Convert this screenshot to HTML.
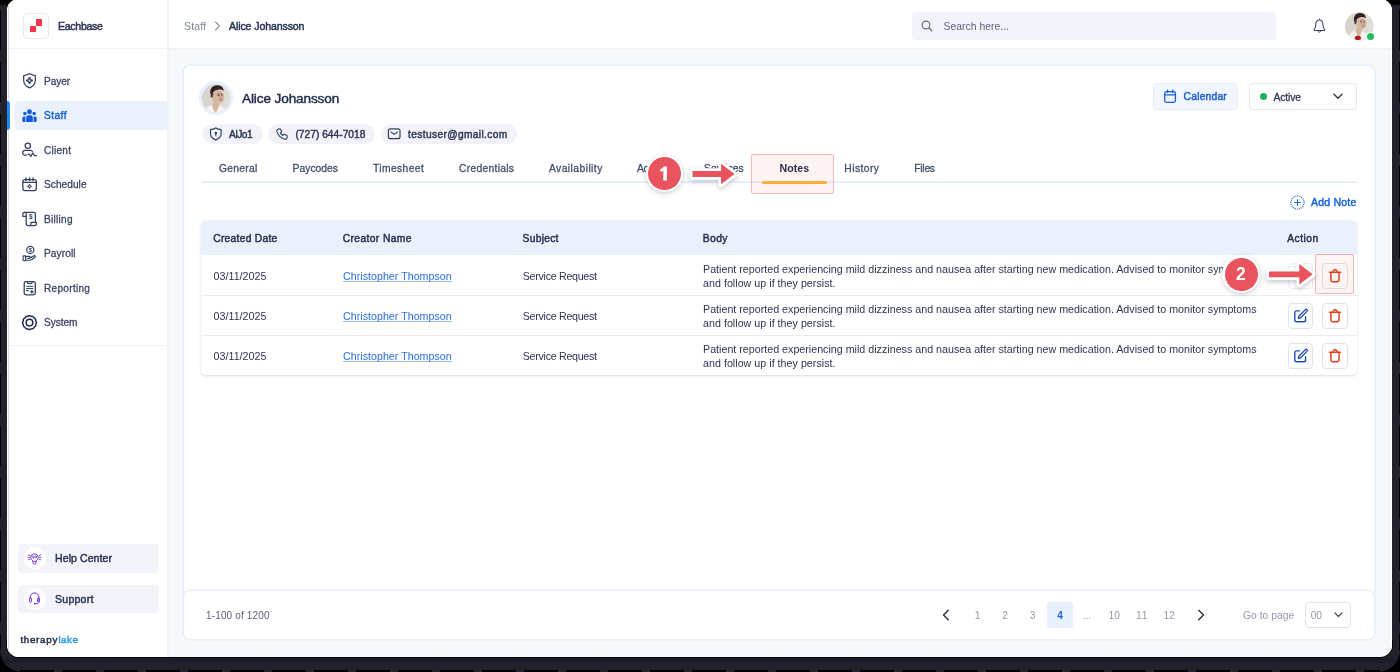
<!DOCTYPE html>
<html><head><meta charset="utf-8"><title>Eachbase</title>
<style>
*{box-sizing:border-box;margin:0;padding:0}
html,body{width:1400px;height:672px;overflow:hidden;background:#000;font-family:"Liberation Sans",sans-serif;}
#frame{position:absolute;left:0;top:0;width:1400px;height:672px;overflow:hidden;background:#000}
.abs{position:absolute}
.t{position:absolute;white-space:pre;font-family:"Liberation Sans",sans-serif}
svg{position:absolute;overflow:visible}
#txt{position:absolute;left:0;top:0;width:1400px;height:672px;will-change:transform}

</style></head>
<body>
<div id="frame">
<div class="abs" style="left:0;top:-40px;width:1400px;height:712px;border-radius:22px;background:#22212c"></div><div class="abs" style="left:0;top:0;width:16px;height:6px;background:linear-gradient(#000 60%,#22212c)"></div><div class="abs" style="right:0;top:0;width:16px;height:6px;background:linear-gradient(#000 60%,#22212c)"></div><div class="abs" style="left:2px;top:658px;width:1396px;height:5.2px;border-radius:0 0 14px 14px;background:#191d2c"></div><div class="abs" style="left:6px;top:640px;width:1386.5px;height:18.2px;border-radius:0 0 13px 13px;background:#07080d"></div><div class="abs" style="left:20px;top:670.4px;width:1360px;height:2px;background:repeating-linear-gradient(90deg,#000 0 34px,#22212c 34px 42px)"></div><div class="abs" style="left:0;top:10px;width:1px;height:640px;background:repeating-linear-gradient(180deg,#000 0 40px,#22212c 40px 52px)"></div><div class="abs" style="left:1399px;top:10px;width:1px;height:640px;background:repeating-linear-gradient(180deg,#000 0 40px,#22212c 40px 52px)"></div><div id="app" class="abs" style="left:6.5px;top:-1px;width:1385.5px;height:658px;border-radius:12px;background:#f6f9fc;overflow:hidden"><div class="abs" style="left:-6.5px;top:1px;width:1400px;height:672px"><div class="abs" style="left:0;top:0;width:167px;height:672px;background:#fff"></div><div class="abs" style="left:0;top:0;width:1400px;height:48px;background:#fff"></div><div class="abs" style="left:167px;top:0;width:1.6px;height:672px;background:#eef3fc"></div><div class="abs" style="left:0;top:48px;width:1400px;height:1px;background:#eef2f9"></div><div class="abs" style="left:8px;top:345px;width:159px;height:1px;background:#eff3fa"></div><div class="abs" style="left:8px;top:0;width:1px;height:672px;background:#d6d9e1"></div><div class="abs" style="left:1390.6px;top:0;width:1px;height:672px;background:#cfd2da"></div><div class="abs" style="left:1391.4px;top:0;width:1.2px;height:672px;background:#fff"></div><div class="abs" style="left:23px;top:13px;width:26px;height:26px;border:1px solid #e6eaf2;border-radius:4px;background:#fff"></div><div class="abs" style="left:36px;top:19px;width:6px;height:7px;background:#f5364a"></div><div class="abs" style="left:30px;top:26px;width:6px;height:6px;background:#f5364a"></div><svg style="left:214px;top:21px" width="7" height="10" viewBox="0 0 7 10"><path d="M1.5 1 L5.5 5 L1.5 9" fill="none" stroke="#8a93a6" stroke-width="1.1" stroke-linecap="round" stroke-linejoin="round"/></svg><div class="abs" style="left:911.7px;top:11.5px;width:364.5px;height:28.3px;border-radius:4px;background:#f2f4f9"></div><svg style="left:921px;top:20px" width="12" height="12" viewBox="0 0 12 12"><circle cx="5" cy="5" r="3.9" fill="none" stroke="#5a6480" stroke-width="1.1"/><path d="M8 8 L11 11" stroke="#5a6480" stroke-width="1.1" stroke-linecap="round"/></svg><svg style="left:1310px;top:16px" width="20" height="20" viewBox="1310 16 20 20"><path d="M1319.4 20 C1316.9 20 1315.9 22 1315.9 24.2 C1315.9 26.6 1315.4 28.2 1314.2 29.6 C1313.9 30 1314.1 30.5 1314.7 30.5 H1324.1 C1324.7 30.5 1324.9 30 1324.6 29.6 C1323.4 28.2 1322.9 26.6 1322.9 24.2 C1322.9 22 1321.9 20 1319.4 20 Z M1319.4 19 V20" fill="none" stroke="#3d4763" stroke-width="1.05" stroke-linejoin="round" stroke-linecap="round"/><path d="M1317.8 31 C1318 32.7 1320.8 32.7 1321 31" fill="none" stroke="#3d4763" stroke-width="1.0" stroke-linecap="round"/></svg><div class="abs" style="left:15px;top:101px;width:152px;height:29px;border-radius:4px 0 0 4px;background:#eaf1fd"></div><div class="abs" style="left:7px;top:101px;width:3px;height:29px;border-radius:0 3px 3px 0;background:#1b8af5"></div><div class="abs" style="left:17.5px;top:544px;width:141px;height:28.5px;border-radius:4px;background:#f3f4f9"></div><div class="abs" style="left:17.5px;top:584.5px;width:141px;height:28.5px;border-radius:4px;background:#f3f4f9"></div><div class="abs" style="left:23.6px;top:547.2px;width:22px;height:22px;border-radius:50%;background:#fff"></div><div class="abs" style="left:23.6px;top:587.7px;width:22px;height:22px;border-radius:50%;background:#fff"></div><div class="abs" style="left:184px;top:65.6px;width:1190px;height:573.6px;border-radius:6px;background:#fff;box-shadow:0 0 0 1.6px #e8effc"></div><div class="abs" style="left:184px;top:590.6px;width:1190px;height:48.6px;border-radius:6px;background:#fff;box-shadow:0 0 0 1.5px #eaf0fa"></div><div class="abs" style="left:199px;top:80.9px;width:34.2px;height:34.2px;border-radius:50%;background:#e6effd"></div><div class="abs" style="left:201.5px;top:124px;width:61.0px;height:20px;border-radius:10px;background:#f1f3f8"></div><div class="abs" style="left:268px;top:124px;width:106.5px;height:20px;border-radius:10px;background:#f1f3f8"></div><div class="abs" style="left:380.5px;top:124px;width:136.0px;height:20px;border-radius:10px;background:#f1f3f8"></div><div class="abs" style="left:1153px;top:83px;width:84.5px;height:26.5px;border:1px solid #e5edfb;border-radius:4px;background:#f2f6fe"></div><div class="abs" style="left:1248.5px;top:83px;width:108.5px;height:26.5px;border:1px solid #e3e7f0;border-radius:4px;background:#fff"></div><div class="abs" style="left:1260px;top:93px;width:7px;height:7px;border-radius:50%;background:#1fb25a"></div><svg style="left:1333px;top:93px" width="10" height="7" viewBox="0 0 10 7"><path d="M1 1.2 L5 5.2 L9 1.2" fill="none" stroke="#2b3040" stroke-width="1.3" stroke-linecap="round" stroke-linejoin="round"/></svg><div class="abs" style="left:202px;top:180.7px;width:1155px;height:2.6px;background:#e8effc"></div><div class="abs" style="left:762px;top:180.9px;width:64.6px;height:3px;border-radius:1.5px;background:#ffb53c"></div><svg style="left:1290px;top:194.7px" width="15" height="15" viewBox="0 0 15 15"><circle cx="7.5" cy="7.5" r="6.6" fill="none" stroke="#1a66dd" stroke-width="1.3" stroke-dasharray="0.01 2.073" stroke-linecap="round"/><path d="M7.5 4.6 V10.4 M4.6 7.5 H10.4" stroke="#1a66dd" stroke-width="1" stroke-linecap="round"/></svg><div class="abs" style="left:201.4px;top:220.7px;width:1155.6px;height:154.8px;border-radius:5px;background:#fff;box-shadow:0 0.6px 2.4px rgba(30,40,70,.17)"></div><div class="abs" style="left:201.4px;top:220.7px;width:1155.6px;height:34.4px;border-radius:5px 5px 0 0;background:#eaf1fd"></div><div class="abs" style="left:201.5px;top:295.3px;width:1155.5px;height:1px;background:#e9ecf3"></div><div class="abs" style="left:201.5px;top:335.3px;width:1155.5px;height:1px;background:#e9ecf3"></div><div class="abs" style="left:1287.7px;top:263.1px;width:25.4px;height:25.6px;border:1px solid #eceef3;border-radius:4px;background:#fff"></div><div class="abs" style="left:1287.7px;top:303.1px;width:25.4px;height:25.6px;border:1px solid #dfe2ea;border-radius:4px;background:#fff"></div><svg style="left:1287.7px;top:303.1px" width="26" height="26" viewBox="0 0 26 26"><path d="M11.6 7.9 H8.6 C7.4 7.9 6.8 8.6 6.8 9.7 V16.9 C6.8 18.1 7.5 18.7 8.6 18.7 H15.8 C17 18.7 17.6 18 17.6 16.9 V13.6" fill="none" stroke="#1c50b4" stroke-width="1.4" stroke-linecap="round"/><path d="M17.3 6.7 C17.8 6.2 18.5 6.2 19 6.7 C19.5 7.2 19.5 7.9 19 8.4 L12.4 15 L10.4 15.4 L10.8 13.2 Z" fill="none" stroke="#1c50b4" stroke-width="1.3" stroke-linejoin="round"/></svg><div class="abs" style="left:1287.7px;top:343.1px;width:25.4px;height:25.6px;border:1px solid #dfe2ea;border-radius:4px;background:#fff"></div><svg style="left:1287.7px;top:343.1px" width="26" height="26" viewBox="0 0 26 26"><path d="M11.6 7.9 H8.6 C7.4 7.9 6.8 8.6 6.8 9.7 V16.9 C6.8 18.1 7.5 18.7 8.6 18.7 H15.8 C17 18.7 17.6 18 17.6 16.9 V13.6" fill="none" stroke="#1c50b4" stroke-width="1.4" stroke-linecap="round"/><path d="M17.3 6.7 C17.8 6.2 18.5 6.2 19 6.7 C19.5 7.2 19.5 7.9 19 8.4 L12.4 15 L10.4 15.4 L10.8 13.2 Z" fill="none" stroke="#1c50b4" stroke-width="1.3" stroke-linejoin="round"/></svg><div class="abs" style="left:1322.1px;top:263.1px;width:25.6px;height:25.6px;border:1px solid #dfe2ea;border-radius:4px;background:#fff"></div><svg style="left:1322.1px;top:263.1px" width="26" height="26" viewBox="0 0 26 26"><path d="M7.5 9.2 H18.5" stroke="#e23f1e" stroke-width="1.45" stroke-linecap="round"/><path d="M11 8.9 C11 7.4 11.7 6.7 13 6.7 C14.3 6.7 15 7.4 15 8.9" fill="none" stroke="#e23f1e" stroke-width="1.35"/><path d="M8.9 9.6 L9 17 C9 18.1 9.6 18.7 10.7 18.7 H15.3 C16.4 18.7 17 18.1 17 17 L17.1 9.6" fill="none" stroke="#e23f1e" stroke-width="1.5" stroke-linejoin="round"/></svg><div class="abs" style="left:1322.1px;top:303.1px;width:25.6px;height:25.6px;border:1px solid #dfe2ea;border-radius:4px;background:#fff"></div><svg style="left:1322.1px;top:303.1px" width="26" height="26" viewBox="0 0 26 26"><path d="M7.5 9.2 H18.5" stroke="#e23f1e" stroke-width="1.45" stroke-linecap="round"/><path d="M11 8.9 C11 7.4 11.7 6.7 13 6.7 C14.3 6.7 15 7.4 15 8.9" fill="none" stroke="#e23f1e" stroke-width="1.35"/><path d="M8.9 9.6 L9 17 C9 18.1 9.6 18.7 10.7 18.7 H15.3 C16.4 18.7 17 18.1 17 17 L17.1 9.6" fill="none" stroke="#e23f1e" stroke-width="1.5" stroke-linejoin="round"/></svg><div class="abs" style="left:1322.1px;top:343.1px;width:25.6px;height:25.6px;border:1px solid #dfe2ea;border-radius:4px;background:#fff"></div><svg style="left:1322.1px;top:343.1px" width="26" height="26" viewBox="0 0 26 26"><path d="M7.5 9.2 H18.5" stroke="#e23f1e" stroke-width="1.45" stroke-linecap="round"/><path d="M11 8.9 C11 7.4 11.7 6.7 13 6.7 C14.3 6.7 15 7.4 15 8.9" fill="none" stroke="#e23f1e" stroke-width="1.35"/><path d="M8.9 9.6 L9 17 C9 18.1 9.6 18.7 10.7 18.7 H15.3 C16.4 18.7 17 18.1 17 17 L17.1 9.6" fill="none" stroke="#e23f1e" stroke-width="1.5" stroke-linejoin="round"/></svg><div class="abs" style="left:1047px;top:602px;width:26px;height:26px;border-radius:3px;background:#e8f0fd"></div><svg style="left:942px;top:609px" width="8" height="12" viewBox="0 0 8 12"><path d="M6.3 1.2 L1.5 6 L6.3 10.8" fill="none" stroke="#2b3040" stroke-width="1.4" stroke-linecap="round" stroke-linejoin="round"/></svg><svg style="left:1197px;top:609px" width="8" height="12" viewBox="0 0 8 12"><path d="M1.7 1.2 L6.5 6 L1.7 10.8" fill="none" stroke="#2b3040" stroke-width="1.4" stroke-linecap="round" stroke-linejoin="round"/></svg><div class="abs" style="left:1304.5px;top:602px;width:46.5px;height:26px;border:1px solid #dfe4ee;border-radius:4px;background:#fff"></div><svg style="left:1333.5px;top:612px" width="9" height="6" viewBox="0 0 9 6"><path d="M1 1 L4.5 4.5 L8 1" fill="none" stroke="#4a5163" stroke-width="1.3" stroke-linecap="round" stroke-linejoin="round"/></svg></div></div><svg style="left:20px;top:70px" width="20" height="22" viewBox="20 70 20 22"><path d="M29.5 73.6 C27.6 75 25.6 75.5 23.7 75.6 V80.2 C23.7 84 26 86.4 29.5 87.8 C33 86.4 35.3 84 35.3 80.2 V75.6 C33.4 75.5 31.4 75 29.5 73.6 Z" fill="none" stroke="#34405f" stroke-width="1.25" stroke-linecap="round" stroke-linejoin="round" /><path d="M29.5 78.3 V82.7 M27.3 80.5 H31.7" stroke="#34405f" stroke-width="2.5" stroke-linecap="round"/><circle cx="29.5" cy="80.5" r="0.95" fill="#f0f2f7"/></svg><svg style="left:20px;top:106px" width="20" height="20" viewBox="20 106 20 20"><circle cx="29.5" cy="111.8" r="2.45" fill="#0f5ce0"/><circle cx="24.9" cy="113.5" r="1.75" fill="#0f5ce0"/><circle cx="34.1" cy="113.5" r="1.75" fill="#0f5ce0"/><path d="M26.2 121.9 V117.6 C26.2 116.2 27.2 115.3 28.5 115.3 H30.5 C31.8 115.3 32.8 116.2 32.8 117.6 V121.9 Z" fill="#0f5ce0"/><path d="M22.3 120.4 V118.6 C22.3 117.5 23 116.6 24 116.6 H25.4 V121.9 H23.8 C22.9 121.9 22.3 121.3 22.3 120.4 Z" fill="#0f5ce0"/><path d="M36.7 120.4 V118.6 C36.7 117.5 36 116.6 35 116.6 H33.6 V121.9 H35.2 C36.1 121.9 36.7 121.3 36.7 120.4 Z" fill="#0f5ce0"/></svg><svg style="left:20px;top:141px" width="20" height="18" viewBox="20 141 20 18"><circle cx="27.8" cy="145.7" r="2.65" fill="none" stroke="#34405f" stroke-width="1.25"/><path d="M32.4 151.5 C32 150.7 31.3 150.3 30.4 150.3 H25 C23.6 150.3 22.8 151.2 22.8 152.5 V153.6 C22.8 154.6 23.5 155.1 24.4 155.1 H26.4" fill="none" stroke="#34405f" stroke-width="1.25" stroke-linecap="round" stroke-linejoin="round" /><path d="M27.8 154.3 H29.5 L30.8 156.5 L32.8 152.9 L34.4 155.7 H36.4" fill="none" stroke="#34405f" stroke-width="1.2" stroke-linecap="round" stroke-linejoin="round" /></svg><svg style="left:20px;top:175px" width="20" height="18" viewBox="20 175 20 18"><rect x="22.9" y="179.5" width="13.4" height="11" rx="2" fill="none" stroke="#34405f" stroke-width="1.25"/><path d="M22.9 182.4 H36.3" fill="none" stroke="#34405f" stroke-width="1.25" stroke-linecap="round" stroke-linejoin="round" /><path d="M26 178 V180.6 M29.5 178 V180.6 M33 178 V180.6" fill="none" stroke="#34405f" stroke-width="1.3" stroke-linecap="round" stroke-linejoin="round" /><path d="M29.5 184 L30.4 185.5 L31.9 186.4 L30.4 187.3 L29.5 188.8 L28.6 187.3 L27.1 186.4 L28.6 185.5 Z" fill="#34405f" stroke="#34405f" stroke-width="0.6" stroke-linejoin="round"/><circle cx="29.5" cy="186.4" r="0.75" fill="#fff"/></svg><svg style="left:20px;top:209px" width="20" height="20" viewBox="20 209 20 20"><path d="M26.2 216.4 H22.9 V213.9 C22.9 212.9 23.6 212.3 24.5 212.3 H33.6 C34.7 212.3 35.4 213 35.4 214.1 V222.3" fill="none" stroke="#34405f" stroke-width="1.25" stroke-linecap="round" stroke-linejoin="round" /><path d="M24.5 212.3 C25.5 212.3 26.2 213 26.2 214.1 V223.6 C26.2 224.8 27 225.6 28.2 225.6 H34.4 C35.6 225.6 36.4 224.8 36.4 223.8 V222.4 H31 V223.7 C31 224.8 30.3 225.6 29.2 225.6" fill="none" stroke="#34405f" stroke-width="1.25" stroke-linecap="round" stroke-linejoin="round" /><text x="30.75" y="219.4" font-family="Liberation Sans, sans-serif" font-size="6.3" font-weight="700" text-anchor="middle" fill="#34405f">$</text></svg><svg style="left:20px;top:244px" width="20" height="20" viewBox="20 244 20 20"><circle cx="30.3" cy="249.9" r="3.55" fill="none" stroke="#34405f" stroke-width="1.2"/><text x="30.3" y="252" font-family="Liberation Sans, sans-serif" font-size="5.6" font-weight="700" text-anchor="middle" fill="#34405f">$</text><rect x="23.1" y="255.8" width="2.5" height="4.9" rx="0.6" fill="none" stroke="#34405f" stroke-width="1.15"/><path d="M25.6 256.4 H28.6 C29.4 256.4 29.9 256.8 30 257.4 H31.6 M30 257.4 C30 258 29.5 258.3 28.8 258.3 H27.8 M30.4 257.6 L34 255.7 C34.9 255.2 35.8 256.2 35 257 C33.5 258.6 31.3 260.2 29.2 260.2 H25.6" fill="none" stroke="#34405f" stroke-width="1.15" stroke-linecap="round" stroke-linejoin="round" /></svg><svg style="left:20px;top:278px" width="20" height="20" viewBox="20 278 20 20"><rect x="24.2" y="281.6" width="11.1" height="13.3" rx="1.8" fill="none" stroke="#34405f" stroke-width="1.3"/><path d="M27 281.6 L27.8 283.5 H31.7 L32.5 281.6" fill="none" stroke="#34405f" stroke-width="1.15" stroke-linecap="round" stroke-linejoin="round" /><path d="M26.6 286.3 H32.9 M26.6 288.5 H32.9 M26.6 290.6 H28.3" fill="none" stroke="#34405f" stroke-width="1.05" stroke-linecap="round" stroke-linejoin="round" /><path d="M30.6 291.8 H33.2 M31.9 290.5 V293.1" fill="none" stroke="#34405f" stroke-width="1.3" stroke-linecap="round" stroke-linejoin="round" /></svg><svg style="left:20px;top:313px" width="20" height="20" viewBox="20 313 20 20"><path d="M36.42 322.60 L36.37 323.05 L36.22 323.48 L35.98 323.89 L35.66 324.25 L35.76 324.72 L35.76 325.19 L35.68 325.65 L35.50 326.06 L35.23 326.43 L34.88 326.73 L34.47 326.96 L34.01 327.11 L33.86 327.57 L33.63 327.98 L33.33 328.33 L32.96 328.60 L32.55 328.78 L32.09 328.86 L31.62 328.86 L31.15 328.76 L30.79 329.08 L30.38 329.32 L29.95 329.47 L29.50 329.53 L29.05 329.47 L28.62 329.32 L28.21 329.08 L27.85 328.76 L27.38 328.86 L26.91 328.86 L26.45 328.78 L26.04 328.60 L25.67 328.33 L25.37 327.98 L25.14 327.57 L24.99 327.11 L24.53 326.96 L24.12 326.73 L23.77 326.43 L23.50 326.06 L23.32 325.65 L23.24 325.19 L23.24 324.72 L23.34 324.25 L23.02 323.89 L22.78 323.48 L22.63 323.05 L22.57 322.60 L22.63 322.15 L22.78 321.72 L23.02 321.31 L23.34 320.95 L23.24 320.48 L23.24 320.01 L23.32 319.55 L23.50 319.14 L23.77 318.77 L24.12 318.47 L24.53 318.24 L24.99 318.09 L25.14 317.63 L25.37 317.22 L25.67 316.87 L26.04 316.60 L26.45 316.42 L26.91 316.34 L27.38 316.34 L27.85 316.44 L28.21 316.12 L28.62 315.88 L29.05 315.73 L29.50 315.68 L29.95 315.73 L30.38 315.88 L30.79 316.12 L31.15 316.44 L31.62 316.34 L32.09 316.34 L32.55 316.42 L32.96 316.60 L33.33 316.87 L33.63 317.22 L33.86 317.63 L34.01 318.09 L34.47 318.24 L34.88 318.47 L35.23 318.77 L35.50 319.14 L35.68 319.55 L35.76 320.01 L35.76 320.48 L35.66 320.95 L35.98 321.31 L36.22 321.72 L36.37 322.15 L36.42 322.60 Z" fill="none" stroke="#1f2b4f" stroke-width="1.45" stroke-linejoin="round"/><circle cx="29.5" cy="322.6" r="3.35" fill="none" stroke="#1f2b4f" stroke-width="1.5"/></svg><svg style="left:24px;top:548px" width="22" height="22" viewBox="24 548 22 22"><path d="M32.6 560.6 C31.3 559.7 30.9 558.4 30.9 557.3 C30.9 555.3 32.5 553.8 34.5 553.8 C36.5 553.8 38.1 555.3 38.1 557.3 C38.1 558.4 37.7 559.7 36.4 560.6 L35.9 563.2 C35.8 563.9 35.3 564.3 34.5 564.3 C33.7 564.3 33.2 563.9 33.1 563.2 Z M33 561.4 H36" fill="none" stroke="#6b36d2" stroke-width="0.95" stroke-linecap="round" stroke-linejoin="round" /><path d="M28.3 555 L30 555.6 M28 557.4 H29.8 M28.3 559.8 L30 559.2 M40.7 555 L39 555.6 M41 557.4 H39.2 M40.7 559.8 L39 559.2" fill="none" stroke="#6b36d2" stroke-width="0.85" stroke-linecap="round" stroke-linejoin="round" /><circle cx="33.3" cy="557" r="0.95" fill="none" stroke="#6b36d2" stroke-width="0.8"/><circle cx="35.7" cy="557" r="0.95" fill="none" stroke="#6b36d2" stroke-width="0.8"/></svg><svg style="left:24px;top:588px" width="22" height="22" viewBox="24 588 22 22"><path d="M30.1 598.6 V597.3 C30.1 594.7 32 592.9 34.5 592.9 C37 592.9 38.9 594.7 38.9 597.3 V601.6 C38.9 602.9 38 603.6 36.8 603.6 H35.4" fill="none" stroke="#6b36d2" stroke-width="1.0" stroke-linecap="round" stroke-linejoin="round" /><rect x="29.5" y="597.9" width="2" height="4.3" rx="1" fill="none" stroke="#6b36d2" stroke-width="0.95"/><rect x="37.5" y="597.9" width="2" height="4.3" rx="1" fill="none" stroke="#6b36d2" stroke-width="0.95"/><circle cx="34.8" cy="603.6" r="0.85" fill="#6b36d2"/></svg><svg style="left:207px;top:124px" width="18" height="20" viewBox="207 124 18 20"><path d="M215.8 127.9 C214.2 129.1 212.3 129.5 210.5 129.6 V133.4 C210.5 136.8 212.7 138.7 215.8 139.9 C218.9 138.7 221.1 136.8 221.1 133.4 V129.6 C219.3 129.5 217.4 129.1 215.8 127.9 Z" fill="none" stroke="#34405f" stroke-width="1.2" stroke-linecap="round" stroke-linejoin="round" /><circle cx="215.8" cy="132.9" r="1.25" fill="#34405f"/><path d="M215.8 133 V135.6" stroke="#34405f" stroke-width="1.1" stroke-linecap="round"/></svg><svg style="left:273px;top:124px" width="18" height="20" viewBox="273 124 18 20"><path d="M279.3 128.9 L277.6 129.5 C276.9 129.8 276.6 130.4 276.8 131.2 C277.9 135.2 280.8 138.2 284.9 139.3 C285.7 139.5 286.3 139.2 286.6 138.5 L287.3 136.8 C287.5 136.2 287.3 135.7 286.8 135.4 L284.9 134.4 C284.4 134.2 283.9 134.3 283.6 134.7 L282.9 135.5 C281.7 134.9 280.9 134.1 280.4 133 L281.2 132.3 C281.6 132 281.7 131.5 281.5 131 L280.6 129.3 C280.3 128.9 279.8 128.7 279.3 128.9 Z" fill="none" stroke="#34405f" stroke-width="1.15" stroke-linecap="round" stroke-linejoin="round" /></svg><svg style="left:385px;top:124px" width="18" height="20" viewBox="385 124 18 20"><rect x="388.4" y="128.8" width="11.6" height="9.9" rx="2" fill="none" stroke="#34405f" stroke-width="1.2"/><path d="M391 132 L394.2 134.4 L397.4 132" fill="none" stroke="#34405f" stroke-width="1.15" stroke-linecap="round" stroke-linejoin="round" /></svg><svg style="left:1161px;top:87px" width="18" height="18" viewBox="1161 87 18 18"><rect x="1164.7" y="91.6" width="10.7" height="10.8" rx="1.8" fill="none" stroke="#1a5fd4" stroke-width="1.3"/><path d="M1164.7 94.8 H1175.4" fill="none" stroke="#1a5fd4" stroke-width="1.2" stroke-linecap="round" stroke-linejoin="round" /><path d="M1167.5 90.1 V92.5 M1172.7 90.1 V92.5" fill="none" stroke="#1a5fd4" stroke-width="1.3" stroke-linecap="round" stroke-linejoin="round" /></svg><svg style="left:200.9px;top:82.8px" width="30.4" height="30.4" viewBox="200.9 82.8 30.4 30.4"><defs><clipPath id="ca"><circle cx="0" cy="0" r="14.3"/></clipPath>
<linearGradient id="ga" x1="0" x2="1" y1="0" y2="0"><stop offset="0" stop-color="#d6d2ca"/><stop offset="1" stop-color="#e2dfd9"/></linearGradient>
<filter id="fa" x="-20%" y="-20%" width="140%" height="140%"><feGaussianBlur stdDeviation="0.45"/></filter></defs>
<g transform="translate(216.1 98) scale(0.9930069930069929)"><g clip-path="url(#ca)">
<circle cx="0" cy="0" r="14.6" fill="url(#ga)"/>
<g filter="url(#fa)" transform="translate(0.2 2.1) scale(1.15)">
<path d="M-12.5 15 C-11.5 9.5 -9 6.6 -5.6 4.6 L-2.6 5.4 L-0.8 11 L1.8 4.2 C5.5 5.2 9 8 10.8 15 Z" fill="#f6f3ef"/>
<path d="M-3 0.5 L2.6 1.8 L2.3 4.8 L-0.7 11.8 L-3.6 5.6 C-3 4 -2.8 2 -3 0.5 Z" fill="#d8b49e"/>
<ellipse cx="1.6" cy="-3.2" rx="5.3" ry="6" transform="rotate(-12 1.6 -3.2)" fill="#d9b7a2"/>
<ellipse cx="4" cy="-2.6" rx="1.8" ry="3.6" transform="rotate(-12 4 -2.6)" fill="#bf9a86" opacity=".6"/>
<ellipse cx="-3.9" cy="-4.6" rx="1.2" ry="2.4" transform="rotate(10 -3.9 -4.6)" fill="#5a463d"/>
<path d="M-5.4 -6.2 C-5.8 -10.8 -2.8 -13.3 1 -13.2 C4.4 -13.1 6.4 -11 6.4 -8.2 C4.6 -9.5 2.2 -9.7 0.1 -8.9 C-2 -8.1 -3.4 -6.8 -3.9 -4.4 Z" fill="#2e2420"/>
<path d="M0.6 -5.2 L2.8 -5.7 M4.1 -5.5 L5.5 -5.3" stroke="#4e3a30" stroke-width="0.8" opacity=".85"/>
<path d="M0.9 -4.1 L2.6 -4.3 M4.3 -4.2 L5.3 -4.1" stroke="#3d2c26" stroke-width="0.7" opacity=".8"/>
<path d="M2.4 -0.4 L4.2 -0.5" stroke="#a9675c" stroke-width="0.9"/>

</g></g></g></svg><svg style="left:1344.3999999999999px;top:10.799999999999999px" width="30.8" height="30.8" viewBox="1344.3999999999999 10.799999999999999 30.8 30.8"><defs><clipPath id="cb"><circle cx="0" cy="0" r="14.3"/></clipPath>
<linearGradient id="gb" x1="0" x2="1" y1="0" y2="0"><stop offset="0" stop-color="#d6d2ca"/><stop offset="1" stop-color="#e2dfd9"/></linearGradient>
<filter id="fb" x="-20%" y="-20%" width="140%" height="140%"><feGaussianBlur stdDeviation="0.45"/></filter></defs>
<g transform="translate(1359.8 26.2) scale(1.0069930069930069)"><g clip-path="url(#cb)">
<circle cx="0" cy="0" r="14.6" fill="url(#gb)"/>
<g filter="url(#fb)" transform="">
<path d="M-12.5 15 C-11.5 9.5 -9 6.6 -5.6 4.6 L-2.6 5.4 L-0.8 11 L1.8 4.2 C5.5 5.2 9 8 10.8 15 Z" fill="#f6f3ef"/>
<path d="M-3 0.5 L2.6 1.8 L2.3 4.8 L-0.7 11.8 L-3.6 5.6 C-3 4 -2.8 2 -3 0.5 Z" fill="#d8b49e"/>
<ellipse cx="1.6" cy="-3.2" rx="5.3" ry="6" transform="rotate(-12 1.6 -3.2)" fill="#d9b7a2"/>
<ellipse cx="4" cy="-2.6" rx="1.8" ry="3.6" transform="rotate(-12 4 -2.6)" fill="#bf9a86" opacity=".6"/>
<ellipse cx="-3.9" cy="-4.6" rx="1.2" ry="2.4" transform="rotate(10 -3.9 -4.6)" fill="#5a463d"/>
<path d="M-5.4 -6.2 C-5.8 -10.8 -2.8 -13.3 1 -13.2 C4.4 -13.1 6.4 -11 6.4 -8.2 C4.6 -9.5 2.2 -9.7 0.1 -8.9 C-2 -8.1 -3.4 -6.8 -3.9 -4.4 Z" fill="#2e2420"/>
<path d="M0.6 -5.2 L2.8 -5.7 M4.1 -5.5 L5.5 -5.3" stroke="#4e3a30" stroke-width="0.8" opacity=".85"/>
<path d="M0.9 -4.1 L2.6 -4.3 M4.3 -4.2 L5.3 -4.1" stroke="#3d2c26" stroke-width="0.7" opacity=".8"/>
<path d="M2.4 -0.4 L4.2 -0.5" stroke="#a9675c" stroke-width="0.9"/>
<ellipse cx="-1.5" cy="11.5" rx="3.1" ry="2.1" fill="#ad1a1c"/>
</g></g></g></svg><div class="abs" style="left:1365.9px;top:31.9px;width:9.2px;height:9.2px;border-radius:50%;background:#fff"></div><div class="abs" style="left:1366.9px;top:32.9px;width:7.2px;height:7.2px;border-radius:50%;background:#1fbf60"></div>
<div id="txt">
<span class="t" style="left:58.0px;top:19.3px;line-height:15px;font-size:10.6px;font-weight:400;color:#2a3354;letter-spacing:-0.304px;-webkit-text-stroke:0.45px #2a3354;">Eachbase</span>
<span class="t" style="left:184.0px;top:19.3px;line-height:15px;font-size:10.5px;font-weight:400;color:#7d8597;letter-spacing:0.148px;">Staff</span>
<span class="t" style="left:229.0px;top:19.3px;line-height:15px;font-size:10.6px;font-weight:400;color:#2a3354;letter-spacing:-0.118px;-webkit-text-stroke:0.45px #2a3354;">Alice Johansson</span>
<span class="t" style="left:943.5px;top:19.3px;line-height:15px;font-size:10.4px;font-weight:400;color:#5c6681;letter-spacing:0.017px;">Search here...</span>
<span class="t" style="left:44.0px;top:74.7px;line-height:14px;font-size:10.1px;font-weight:400;color:#3a4465;letter-spacing:-0.044px;-webkit-text-stroke:0.28px #3a4465;">Payer</span>
<span class="t" style="left:44.0px;top:109.2px;line-height:14px;font-size:10.1px;font-weight:400;color:#1a66dd;letter-spacing:0.480px;-webkit-text-stroke:0.45px #1a66dd;">Staff</span>
<span class="t" style="left:44.0px;top:143.7px;line-height:14px;font-size:10.1px;font-weight:400;color:#3a4465;letter-spacing:0.237px;-webkit-text-stroke:0.28px #3a4465;">Client</span>
<span class="t" style="left:44.0px;top:178.2px;line-height:14px;font-size:10.1px;font-weight:400;color:#3a4465;letter-spacing:0.058px;-webkit-text-stroke:0.28px #3a4465;">Schedule</span>
<span class="t" style="left:44.0px;top:212.7px;line-height:14px;font-size:10.1px;font-weight:400;color:#3a4465;letter-spacing:0.260px;-webkit-text-stroke:0.28px #3a4465;">Billing</span>
<span class="t" style="left:44.0px;top:247.2px;line-height:14px;font-size:10.1px;font-weight:400;color:#3a4465;letter-spacing:0.107px;-webkit-text-stroke:0.28px #3a4465;">Payroll</span>
<span class="t" style="left:44.0px;top:281.7px;line-height:14px;font-size:10.1px;font-weight:400;color:#3a4465;letter-spacing:0.277px;-webkit-text-stroke:0.28px #3a4465;">Reporting</span>
<span class="t" style="left:44.0px;top:316.2px;line-height:14px;font-size:10.1px;font-weight:400;color:#3a4465;letter-spacing:-0.031px;-webkit-text-stroke:0.28px #3a4465;">System</span>
<span class="t" style="left:55.0px;top:551.4px;line-height:15px;font-size:10.6px;font-weight:400;color:#2a3354;letter-spacing:0.047px;-webkit-text-stroke:0.45px #2a3354;">Help Center</span>
<span class="t" style="left:55.0px;top:591.9px;line-height:15px;font-size:10.6px;font-weight:400;color:#2a3354;letter-spacing:0.215px;-webkit-text-stroke:0.45px #2a3354;">Support</span>
<span class="t" style="left:20.4px;top:632.9px;line-height:14px;font-size:9.8px;font-weight:400;color:#1e2a4a;letter-spacing:0.702px;-webkit-text-stroke:0.45px #1e2a4a;">therapy</span>
<span class="t" style="left:58.4px;top:632.9px;line-height:14px;font-size:9.8px;font-weight:400;color:#2b98f0;letter-spacing:0.539px;-webkit-text-stroke:0.45px #2b98f0;">lake</span>
<span class="t" style="left:242.0px;top:89.4px;line-height:19px;font-size:13.6px;font-weight:400;color:#232c4d;letter-spacing:-0.121px;-webkit-text-stroke:0.45px #232c4d;">Alice Johansson</span>
<span class="t" style="left:229.1px;top:127.5px;line-height:14px;font-size:10.2px;font-weight:400;color:#2f3857;letter-spacing:-0.496px;-webkit-text-stroke:0.45px #2f3857;">AlJo1</span>
<span class="t" style="left:295.4px;top:127.5px;line-height:14px;font-size:10.2px;font-weight:400;color:#2f3857;letter-spacing:0.025px;-webkit-text-stroke:0.45px #2f3857;">(727) 644-7018</span>
<span class="t" style="left:408.0px;top:127.5px;line-height:14px;font-size:10.2px;font-weight:400;color:#2f3857;letter-spacing:0.370px;-webkit-text-stroke:0.45px #2f3857;">testuser@gmail.com</span>
<span class="t" style="left:1183.6px;top:89.7px;line-height:14px;font-size:10.3px;font-weight:400;color:#1a5ed0;letter-spacing:0.200px;-webkit-text-stroke:0.45px #1a5ed0;">Calendar</span>
<span class="t" style="left:1273.4px;top:90.4px;line-height:15px;font-size:10.4px;font-weight:400;color:#2c3553;letter-spacing:-0.139px;-webkit-text-stroke:0.28px #2c3553;">Active</span>
<span class="t" style="left:219.0px;top:161.9px;line-height:14px;font-size:10.3px;font-weight:400;color:#424c6a;letter-spacing:0.260px;-webkit-text-stroke:0.28px #424c6a;">General</span>
<span class="t" style="left:292.6px;top:161.9px;line-height:14px;font-size:10.3px;font-weight:400;color:#424c6a;letter-spacing:0.024px;-webkit-text-stroke:0.28px #424c6a;">Paycodes</span>
<span class="t" style="left:373.0px;top:161.9px;line-height:14px;font-size:10.3px;font-weight:400;color:#424c6a;letter-spacing:0.387px;-webkit-text-stroke:0.28px #424c6a;">Timesheet</span>
<span class="t" style="left:459.0px;top:161.9px;line-height:14px;font-size:10.3px;font-weight:400;color:#424c6a;letter-spacing:0.291px;-webkit-text-stroke:0.28px #424c6a;">Credentials</span>
<span class="t" style="left:549.0px;top:161.9px;line-height:14px;font-size:10.3px;font-weight:400;color:#424c6a;letter-spacing:0.439px;-webkit-text-stroke:0.28px #424c6a;">Availability</span>
<span class="t" style="left:844.3px;top:161.9px;line-height:14px;font-size:10.3px;font-weight:400;color:#424c6a;letter-spacing:0.442px;-webkit-text-stroke:0.28px #424c6a;">History</span>
<span class="t" style="left:914.3px;top:161.9px;line-height:14px;font-size:10.3px;font-weight:400;color:#424c6a;letter-spacing:-0.262px;-webkit-text-stroke:0.28px #424c6a;">Files</span>
<span class="t" style="left:637.0px;top:161.9px;line-height:14px;font-size:10.3px;font-weight:400;color:#424c6a;letter-spacing:-0.441px;-webkit-text-stroke:0.28px #424c6a;">Access</span>
<span class="t" style="left:704.0px;top:161.9px;line-height:14px;font-size:10.3px;font-weight:400;color:#424c6a;letter-spacing:0.031px;-webkit-text-stroke:0.28px #424c6a;">Services</span>
<span class="t" style="left:779.4px;top:161.2px;line-height:15px;font-size:10.6px;font-weight:700;color:#1d2749;letter-spacing:0.091px;">Notes</span>
<span class="t" style="left:1311.0px;top:195.2px;line-height:15px;font-size:10.5px;font-weight:400;color:#1a66dd;letter-spacing:0.217px;-webkit-text-stroke:0.45px #1a66dd;">Add Note</span>
<span class="t" style="left:213.2px;top:232.1px;line-height:14px;font-size:10.3px;font-weight:400;color:#27304f;letter-spacing:0.259px;-webkit-text-stroke:0.45px #27304f;">Created Date</span>
<span class="t" style="left:342.7px;top:232.1px;line-height:14px;font-size:10.3px;font-weight:400;color:#27304f;letter-spacing:0.375px;-webkit-text-stroke:0.45px #27304f;">Creator Name</span>
<span class="t" style="left:522.5px;top:232.1px;line-height:14px;font-size:10.3px;font-weight:400;color:#27304f;letter-spacing:0.273px;-webkit-text-stroke:0.45px #27304f;">Subject</span>
<span class="t" style="left:702.7px;top:232.1px;line-height:14px;font-size:10.3px;font-weight:400;color:#27304f;letter-spacing:0.439px;-webkit-text-stroke:0.45px #27304f;">Body</span>
<span class="t" style="left:1287.2px;top:232.1px;line-height:14px;font-size:10.3px;font-weight:400;color:#27304f;letter-spacing:0.475px;-webkit-text-stroke:0.45px #27304f;">Action</span>
<span class="t" style="left:213.5px;top:269.1px;line-height:15px;font-size:10.7px;font-weight:400;color:#2c3553;letter-spacing:0.033px;">03/11/2025</span>
<span class="t" style="left:343.0px;top:269.1px;line-height:15px;font-size:10.7px;font-weight:400;color:#2a6fe0;letter-spacing:0.010px;text-decoration:underline;text-underline-offset:0.6px;text-decoration-thickness:1px;text-decoration-skip-ink:none;text-decoration-color:rgba(42,111,224,.5);">Christopher Thompson</span>
<span class="t" style="left:522.8px;top:269.1px;line-height:15px;font-size:10.7px;font-weight:400;color:#2c3553;letter-spacing:-0.302px;">Service Request</span>
<span class="t" style="left:703.0px;top:261.8px;line-height:15px;font-size:10.7px;font-weight:400;color:#2c3553;letter-spacing:0.004px;">Patient reported experiencing mild dizziness and nausea after starting new medication. Advised to monitor symptoms</span>
<span class="t" style="left:703.0px;top:276.1px;line-height:15px;font-size:10.7px;font-weight:400;color:#2c3553;letter-spacing:0.021px;">and follow up if they persist.</span>
<span class="t" style="left:213.5px;top:309.1px;line-height:15px;font-size:10.7px;font-weight:400;color:#2c3553;letter-spacing:0.033px;">03/11/2025</span>
<span class="t" style="left:343.0px;top:309.1px;line-height:15px;font-size:10.7px;font-weight:400;color:#2a6fe0;letter-spacing:0.010px;text-decoration:underline;text-underline-offset:0.6px;text-decoration-thickness:1px;text-decoration-skip-ink:none;text-decoration-color:rgba(42,111,224,.5);">Christopher Thompson</span>
<span class="t" style="left:522.8px;top:309.1px;line-height:15px;font-size:10.7px;font-weight:400;color:#2c3553;letter-spacing:-0.302px;">Service Request</span>
<span class="t" style="left:703.0px;top:301.8px;line-height:15px;font-size:10.7px;font-weight:400;color:#2c3553;letter-spacing:0.004px;">Patient reported experiencing mild dizziness and nausea after starting new medication. Advised to monitor symptoms</span>
<span class="t" style="left:703.0px;top:316.1px;line-height:15px;font-size:10.7px;font-weight:400;color:#2c3553;letter-spacing:0.021px;">and follow up if they persist.</span>
<span class="t" style="left:213.5px;top:349.1px;line-height:15px;font-size:10.7px;font-weight:400;color:#2c3553;letter-spacing:0.033px;">03/11/2025</span>
<span class="t" style="left:343.0px;top:349.1px;line-height:15px;font-size:10.7px;font-weight:400;color:#2a6fe0;letter-spacing:0.010px;text-decoration:underline;text-underline-offset:0.6px;text-decoration-thickness:1px;text-decoration-skip-ink:none;text-decoration-color:rgba(42,111,224,.5);">Christopher Thompson</span>
<span class="t" style="left:522.8px;top:349.1px;line-height:15px;font-size:10.7px;font-weight:400;color:#2c3553;letter-spacing:-0.302px;">Service Request</span>
<span class="t" style="left:703.0px;top:341.8px;line-height:15px;font-size:10.7px;font-weight:400;color:#2c3553;letter-spacing:0.004px;">Patient reported experiencing mild dizziness and nausea after starting new medication. Advised to monitor symptoms</span>
<span class="t" style="left:703.0px;top:356.1px;line-height:15px;font-size:10.7px;font-weight:400;color:#2c3553;letter-spacing:0.021px;">and follow up if they persist.</span>
<span class="t" style="left:206.0px;top:608.6px;line-height:14px;font-size:10px;font-weight:400;color:#5a6275;letter-spacing:0.148px;">1-100 of 1200</span>
<span class="t" style="left:974.7px;top:608.6px;line-height:14px;font-size:10.2px;font-weight:400;color:#9299ab;letter-spacing:-0.072px;">1</span>
<span class="t" style="left:1002.2px;top:608.6px;line-height:14px;font-size:10.2px;font-weight:400;color:#9299ab;letter-spacing:-0.072px;">2</span>
<span class="t" style="left:1029.7px;top:608.6px;line-height:14px;font-size:10.2px;font-weight:400;color:#9299ab;letter-spacing:-0.072px;">3</span>
<span class="t" style="left:1083.0px;top:608.6px;line-height:14px;font-size:10.2px;font-weight:400;color:#9299ab;letter-spacing:-0.250px;">...</span>
<span class="t" style="left:1108.6px;top:608.6px;line-height:14px;font-size:10.2px;font-weight:400;color:#9299ab;letter-spacing:0.056px;">10</span>
<span class="t" style="left:1136.1px;top:608.6px;line-height:14px;font-size:10.2px;font-weight:400;color:#9299ab;letter-spacing:0.822px;">11</span>
<span class="t" style="left:1163.6px;top:608.6px;line-height:14px;font-size:10.2px;font-weight:400;color:#9299ab;letter-spacing:0.056px;">12</span>
<span class="t" style="left:1057.2px;top:608.6px;line-height:14px;font-size:10px;font-weight:700;color:#1a66dd;letter-spacing:0.138px;">4</span>
<span class="t" style="left:1243.0px;top:608.6px;line-height:14px;font-size:10.3px;font-weight:400;color:#9299ab;letter-spacing:0.039px;">Go to page</span>
<span class="t" style="left:1310.7px;top:608.6px;line-height:14px;font-size:10.2px;font-weight:400;color:#9299ab;letter-spacing:-0.044px;">00</span>
</div>
<div class="abs" style="left:751px;top:154.3px;width:83px;height:39.9px;border:1px solid rgba(240,122,104,.5);border-radius:2.5px;background:rgba(240,96,84,.065)"></div><div class="abs" style="left:1315px;top:254px;width:38.5px;height:39.5px;border:1px solid rgba(240,122,104,.5);border-radius:2.5px;background:rgba(240,96,84,.065)"></div><svg style="left:0;top:0" width="1400" height="672" viewBox="0 0 1400 672"><g style="filter:drop-shadow(0.5px 2px 2.5px rgba(30,30,60,.25))"><path d="M692.5 171.1 H721.1 V163.7 L734.5 174 L721.1 184.3 V176.9 H692.5 Z" fill="#fff" stroke="#fff" stroke-width="5.6" stroke-linejoin="round"/></g><path d="M692.5 171.1 H721.1 V163.7 L734.5 174 L721.1 184.3 V176.9 H692.5 Z" fill="#e8535d"/></svg><div class="abs" style="left:645.5px;top:154.5px;width:37.8px;height:37.8px;border-radius:50%;background:#fff;box-shadow:0 1.5px 5px rgba(30,30,60,.22)"></div><div class="abs" style="left:647.9px;top:156.9px;width:33.0px;height:33.0px;border-radius:50%;background:#e8535d"></div><svg style="left:0;top:0" width="1400" height="672" viewBox="0 0 1400 672"><path d="M666.9 166.6 H663.9 L659.6999999999999 169.9 L661.3 172.0 L663.3 170.4 V180.5 H666.9 Z" fill="#fff"/></svg><svg style="left:0;top:0" width="1400" height="672" viewBox="0 0 1400 672"><g style="filter:drop-shadow(0.5px 2px 2.5px rgba(30,30,60,.25))"><path d="M1269 271.40000000000003 H1299.3 V264.0 L1312.7 274.3 L1299.3 284.6 V277.2 H1269 Z" fill="#fff" stroke="#fff" stroke-width="5.6" stroke-linejoin="round"/></g><path d="M1269 271.40000000000003 H1299.3 V264.0 L1312.7 274.3 L1299.3 284.6 V277.2 H1269 Z" fill="#e8535d"/></svg><div class="abs" style="left:1222.3999999999999px;top:255.29999999999998px;width:37.8px;height:37.8px;border-radius:50%;background:#fff;box-shadow:0 1.5px 5px rgba(30,30,60,.22)"></div><div class="abs" style="left:1224.8px;top:257.7px;width:33.0px;height:33.0px;border-radius:50%;background:#e8535d"></div><div class="abs" style="left:1222.3999999999999px;top:255.29999999999998px;width:37.8px;height:37.8px;will-change:transform"><span class="t" style="left:0;width:37.8px;text-align:center;top:6.949999999999998px;line-height:24.5px;font-size:17.5px;font-weight:700;color:#fff">2</span></div>
</div>
</body></html>
